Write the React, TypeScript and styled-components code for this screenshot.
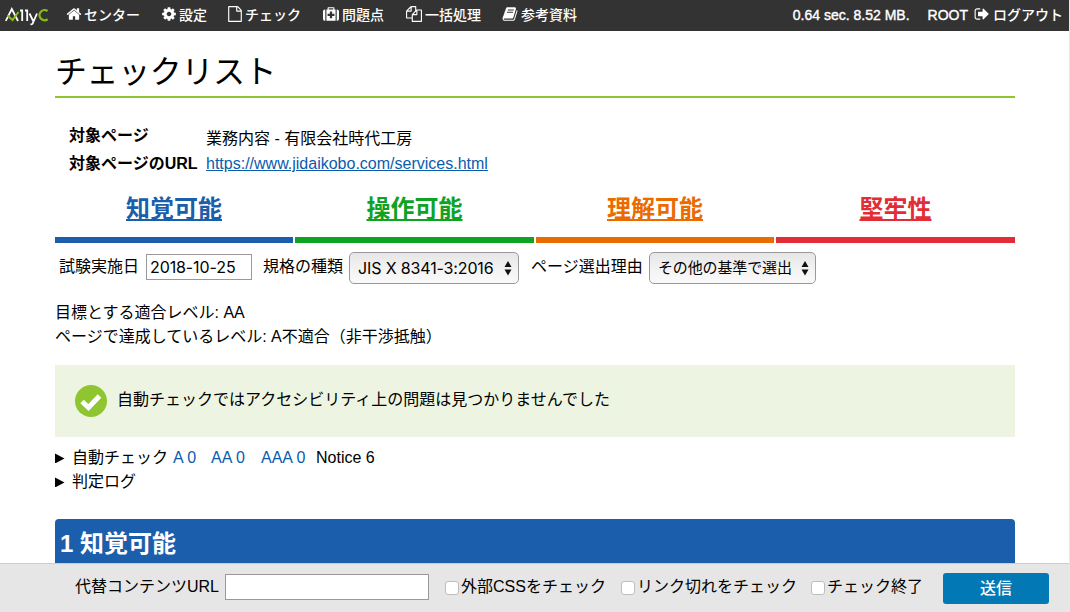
import React from "react";
import styled, { createGlobalStyle } from "styled-components";

const sans = `"Liberation Sans", "Noto Sans CJK JP", sans-serif`;
const ui = `Inter, "Noto Sans CJK JP", sans-serif`;

const Global = createGlobalStyle`
  * { box-sizing: border-box; }
  body { margin: 0; background: #fff; color: #000; font: 16px/24px ${sans}; overflow: hidden; }
  a { color: #0b5cad; }
`;

const Page = styled.div`
  display: flex;
  flex-direction: column;
  width: 1070px;
  height: 612px;
  border-right: 1px solid #e7e7e7;
  white-space: nowrap;
`;

const TopBar = styled.header`
  flex: none;
  display: flex;
  align-items: center;
  height: 31px;
  padding: 0 6px 1px 5px;
  background: #333;
  color: #fff;
  font-size: 14px;
  line-height: 30px;
`;

const Logo = styled.span`
  display: flex;
  width: 61px;
`;

const NavItem = styled.a<{ $w: number; $gap: number }>`
  display: flex;
  align-items: center;
  gap: ${(p) => p.$gap}px;
  width: ${(p) => p.$w}px;
  color: #fff;
  font-weight: 500;
  text-decoration: none;

  svg { margin-top: -2px; }
`;

const Status = styled.span`
  margin-left: auto;
  margin-right: 18px;
  -webkit-text-stroke: 0.4px #fff;
`;

const Logout = styled.a`
  display: flex;
  align-items: center;
  gap: 3px;
  color: #fff;
  font-weight: 500;
  text-decoration: none;

  svg { margin-top: -2px; }
`;

const UserName = styled.span`
  margin-right: 3px;
  -webkit-text-stroke: 0.4px #fff;
`;

const Main = styled.main`
  flex: 1;
  min-height: 0;
  overflow: hidden;
  padding: 17px 54px 0 55px;
`;

const Title = styled.h1`
  margin: 0;
  height: 50px;
  border-bottom: 2px solid #8fc531;
  font: 400 32px/48px ${sans};
  letter-spacing: -0.4px;
`;

const Info = styled.dl`
  display: grid;
  grid-template-columns: 137px 1fr;
  margin: 25px 0 0 14px;
  row-gap: 4px;
`;

const Term = styled.dt`
  height: 24px;
  font-weight: 700;
  line-height: 26px;
`;

const Detail = styled.dd<{ $drop?: number }>`
  margin: 0;
  padding-top: ${(p) => p.$drop ?? 0}px;
  height: 24px;
  line-height: 26px;
`;

const Tabs = styled.nav`
  display: grid;
  grid-template-columns: 238px 239px 238px 239px;
  gap: 2px;
  margin-top: 12px;
`;

const Tab = styled.a<{ $c: string }>`
  height: 56px;
  border-bottom: 6px solid ${(p) => p.$c};
  && { color: ${(p) => p.$c}; }
  font-size: 24px;
  font-weight: 700;
  line-height: 43px;
  text-align: center;
  text-decoration-thickness: 2px;
  text-underline-offset: 2px;
  text-decoration-skip-ink: none;
`;

const FormRow = styled.div`
  display: flex;
  align-items: center;
  height: 32px;
  margin-top: 9px;
  padding-left: 4px;
`;

const Label = styled.label<{ $w: number }>`
  width: ${(p) => p.$w}px;
  margin-top: -2px;
`;

const TextInput = styled.input<{ $w: number; $gap: number }>`
  width: ${(p) => p.$w}px;
  height: 26px;
  margin: -2px ${(p) => p.$gap}px 0 0;
  padding: 0 3px;
  border: 1px solid #999;
  border-radius: 0;
  background: #fff;
  color: #000;
  font: 16px/24px ${ui};
  letter-spacing: -0.1px;
`;

const SelectBox = styled.button<{ $w: number; $gap?: number; $size: number }>`
  display: flex;
  align-items: center;
  justify-content: space-between;
  width: ${(p) => p.$w}px;
  height: 32px;
  margin: 0 ${(p) => p.$gap ?? 0}px 0 0;
  padding: 0 6px 0 8px;
  border: 1px solid #999;
  border-radius: 5px;
  background: linear-gradient(#e6e6e6, #f4f4f4 60%, #fafafa);
  color: #000;
  font: ${(p) => p.$size}px/30px ${ui};
  letter-spacing: -0.14px;
`;

const Levels = styled.div`
  margin-top: 17px;
`;

const Notice = styled.div`
  display: flex;
  align-items: center;
  gap: 10px;
  height: 72px;
  margin-top: 16px;
  padding-left: 20px;
  background: #edf5e2;
`;

const NoticeText = styled.p`
  margin: 0;
  padding-bottom: 3px;
`;

const Toggles = styled.div`
  margin-top: 9px;
`;

const Toggle = styled.div`
  display: flex;
  align-items: center;
  height: 24px;
  line-height: 26px;
`;

const ToggleLabel = styled.span`
  margin: 0 5px 0 7px;
`;

const Level = styled.span<{ $w: number }>`
  width: ${(p) => p.$w}px;
  color: #0b5cad;
`;

const Section = styled.h2`
  margin: 25px 0 0;
  height: 70px;
  padding-left: 5px;
  border-radius: 4px;
  background: #1b5eab;
  color: #fff;
  font: 700 24px/50px ${sans};
`;

const BottomBar = styled.footer`
  flex: none;
  display: flex;
  align-items: center;
  height: 49px;
  padding-left: 75px;
  border-top: 1px solid #ccc;
  background: #e6e6e6;
`;

const Check = styled.label<{ $w: number }>`
  display: flex;
  align-items: center;
  gap: 2px;
  width: ${(p) => p.$w}px;
  margin-top: -3px;
`;

const Box = styled.input`
  appearance: none;
  width: 14px;
  height: 14px;
  margin: 2px 0 0;
  border: 1px solid #bdbdbd;
  border-radius: 3px;
  background: #fff;
`;

const Submit = styled.button`
  width: 106px;
  height: 31px;
  margin-top: 1px;
  padding: 0;
  border: 0;
  border-radius: 3px;
  background: #0278b4;
  color: #fff;
  font: 500 16px/31px ${sans};
`;

const paths = {
  home: "M1472 992v480q0 26-19 45t-45 19h-384v-384h-256v384h-384q-26 0-45-19t-19-45v-480q0-1 .5-3t.5-3l575-474 575 474q1 2 1 6zm223-69l-62 74q-8 9-21 11h-3q-13 0-21-7l-692-577-692 577q-12 8-24 7-13-2-21-11l-62-74q-8-10-7-23.5t11-21.5l719-599q32-26 76-26t76 26l244 204v-195q0-14 9-23t23-9h192q14 0 23 9t9 23v408l219 182q10 8 11 21.5t-7 23.5z",
  cog: "M1152 896q0-106-75-181t-181-75-181 75-75 181 75 181 181 75 181-75 75-181zm512-109v222q0 12-8 23t-20 13l-185 28q-19 54-39 91 35 50 107 138 10 12 10 25t-9 23q-27 37-99 108t-94 71q-12 0-26-9l-138-108q-44 23-91 38-16 136-29 186-7 28-36 28h-222q-14 0-24.5-8.5t-11.5-21.5l-28-184q-49-16-90-37l-141 107q-10 9-25 9-14 0-25-11-126-114-165-168-7-10-7-23 0-12 8-23 15-21 51-66.5t54-70.5q-27-50-41-99l-183-27q-13-2-21-12.5t-8-23.5v-222q0-12 8-23t19-13l186-28q14-46 39-92-40-57-107-138-10-12-10-24 0-10 9-23 26-36 98.5-107.5t94.5-71.5q13 0 26 10l138 107q44-23 91-38 16-136 29-186 7-28 36-28h222q14 0 24.5 8.5t11.5 21.5l28 184q49 16 90 37l142-107q9-9 24-9 13 0 25 10 129 119 165 170 7 8 7 22 0 12-8 23-15 21-51 66.5t-54 70.5q26 50 41 98l183 28q13 2 21 12.5t8 23.5z",
  file: "M1596 380q28 28 48 76t20 88v1152q0 40-28 68t-68 28h-1344q-40 0-68-28t-28-68v-1600q0-40 28-68t68-28h896q40 0 88 20t76 48zm-444-244v376h376q-10-29-22-41l-313-313q-12-12-41-22zm384 1528v-1024h-416q-40 0-68-28t-28-68v-416h-768v1536h1280z",
  medkit: "M1280 1088v-192q0-14-9-23t-23-9h-224v-224q0-14-9-23t-23-9h-192q-14 0-23 9t-9 23v224h-224q-14 0-23 9t-9 23v192q0 14 9 23t23 9h224v224q0 14 9 23t23 9h192q14 0 23-9t9-23v-224h224q14 0 23-9t9-23zm-640-704h512v-128h-512v128zm-384 0v1280h-32q-92 0-158-66t-66-158v-832q0-92 66-158t158-66h32zm1152 0v1280h-1024v-1280h128v-160q0-40 28-68t68-28h576q40 0 68 28t28 68v160h128zm384 224v832q0 92-66 158t-158 66h-32v-1280h32q92 0 158 66t66 158z",
  files: "M1696 384q40 0 68 28t28 68v1216q0 40-28 68t-68 28h-960q-40 0-68-28t-28-68v-288h-544q-40 0-68-28t-28-68v-672q0-40 20-88t48-76l408-408q28-28 76-48t88-20h416q40 0 68 28t28 68v328q68-40 128-40h416zm-544 213l-299 299h299v-299zm-640-384l-299 299h299v-299zm196 647l316-316v-416h-384v416q0 40-28 68t-68 28h-416v640h512v-256q0-40 20-88t48-76zm956 804v-1152h-384v416q0 40-28 68t-68 28h-416v640h896z",
  book: "M1703 478q40 57 18 129l-275 906q-19 64-76.5 107.5t-122.5 43.5h-923q-77 0-148.5-53.5t-99.5-131.5q-24-67-2-127 0-4 3-27t4-37q1-8-3-21.5t-3-19.5q2-11 8-21t16.5-23.5 16.5-23.5q23-38 45-91.5t30-91.5q3-10 .5-30t-.5-28q3-11 17-28t17-23q21-36 42-92t25-90q1-9-2.5-32t.5-28q4-13 22-30.5t22-22.5q19-26 42.5-84.5t27.5-96.5q1-8-3-25.5t-2-26.5q2-8 9-18t18-23 17-21q8-12 16.5-30.5t15-35 16-36 19.5-32 26.5-23.5 36-11.5 47.5 5.5l-1 3q38-9 51-9h761q74 0 114 56t18 130l-274 906q-36 119-71.5 153.5t-128.5 34.5h-869q-27 0-38 15-11 16-1 43 24 70 144 70h923q29 0 56-15.5t35-41.5l300-987q7-22 5-57 38 15 59 43zm-1064 2q-4 13 2 22.5t20 9.5h608q13 0 25.5-9.5t16.5-22.5l21-64q4-13-2-22.5t-20-9.5h-608q-13 0-25.5 9.5t-16.5 22.5zm-83 256q-4 13 2 22.5t20 9.5h608q13 0 25.5-9.5t16.5-22.5l21-64q4-13-2-22.5t-20-9.5h-608q-13 0-25.5 9.5t-16.5 22.5z",
  signOut: "M704 1440q0 4 1 20t.5 26.5-3 23.5-10 19.5-20.5 6.5h-320q-119 0-203.5-84.5t-84.5-203.5v-704q0-119 84.5-203.5t203.5-84.5h320q13 0 22.5 9.5t9.5 22.5q0 4 1 20t.5 26.5-3 23.5-10 19.5-20.5 6.5h-320q-66 0-113 47t-47 113v704q0 66 47 113t113 47h312l11.5 1 11.5 3 8 5.5 7 9 2 13.5zm928-544q0 26-19 45l-544 544q-19 19-45 19t-45-19-19-45v-288h-448q-26 0-45-19t-19-45v-384q0-26 19-45t45-19h448v-288q0-26 19-45t45-19 45 19l544 544q19 19 19 45z",
};

const Icon = ({ name, size = 16 }: { name: keyof typeof paths; size?: number }) => (
  <svg width={size} height={size} viewBox="0 0 1792 1792" fill="currentColor" aria-hidden>
    <path d={paths[name]} />
  </svg>
);

const nav: { icon: keyof typeof paths; label: string; w: number; gap: number }[] = [
  { icon: "home", label: "センター", w: 95, gap: 2 },
  { icon: "cog", label: "設定", w: 66, gap: 2 },
  { icon: "file", label: "チェック", w: 96, gap: 2 },
  { icon: "medkit", label: "問題点", w: 83, gap: 3 },
  { icon: "files", label: "一括処理", w: 96, gap: 3 },
  { icon: "book", label: "参考資料", w: 90, gap: 3 },
];

const tabs = [
  ["知覚可能", "#1b5eab"],
  ["操作可能", "#0fa324"],
  ["理解可能", "#ea6c00"],
  ["堅牢性", "#e22d37"],
];

const Updown = () => (
  <svg width="8" height="16" viewBox="0 0 8 16" aria-hidden>
    <path d="M4 1L7.5 7H.5zM4 15.5L.5 9.5h7z" fill="#111" />
  </svg>
);

const Triangle = () => (
  <svg width="10" height="10" viewBox="0 0 10 10" aria-hidden>
    <path d="M0 .5L9.500 5.500 0 10.500z" fill="#000" />
  </svg>
);

const LogoMark = () => (
  <svg width="46" height="22" viewBox="0 0 46 22" fill="none" aria-label="A11yC">
    <path d="M.8 16.800L6.800 5l6.200 12" stroke="#fff" strokeWidth="1.800" />
    <path d="M2.500 11.500l5 4.500L13.500 8" stroke="#86bc18" strokeWidth="2" />
    <path d="M15 6.500h2.200V17M20 6.500h2.200V17M24.500 9.500l3.700 7.500M32 9.500L27.700 19.500q-.4 1-2.200.7" stroke="#fff" strokeWidth="1.800" />
    <path d="M42.600 7A5.100 5.100 0 1 0 42.600 15.300" stroke="#86bc18" strokeWidth="2.300" />
  </svg>
);

export default function App() {
  return (
    <Page>
      <Global />
      <TopBar>
        <Logo><LogoMark /></Logo>
        {nav.map((n) => (
          <NavItem key={n.label} $w={n.w} $gap={n.gap}>
            <Icon name={n.icon} />
            {n.label}
          </NavItem>
        ))}
        <Status>0.64 sec. 8.52 MB.</Status>
        <Logout>
          <UserName>ROOT</UserName>
          <Icon name="signOut" />
          ログアウト
        </Logout>
      </TopBar>
      <Main>
        <Title>チェックリスト</Title>
        <Info>
          <Term>対象ページ</Term>
          <Detail $drop={3}>業務内容 - 有限会社時代工房</Detail>
          <Term>対象ページのURL</Term>
          <Detail><a href="#page">https://www.jidaikobo.com/services.html</a></Detail>
        </Info>
        <Tabs>
          {tabs.map(([label, c]) => (
            <Tab key={label} href="#section" $c={c}>{label}</Tab>
          ))}
        </Tabs>
        <FormRow>
          <Label $w={87}>試験実施日</Label>
          <TextInput $w={106} $gap={11} defaultValue="2018-10-25" />
          <Label $w={86}>規格の種類</Label>
          <SelectBox $w={170} $gap={12} $size={16}>JIS X 8341-3:2016<Updown /></SelectBox>
          <Label $w={118}>ページ選出理由</Label>
          <SelectBox $w={167} $size={15}>その他の基準で選出<Updown /></SelectBox>
        </FormRow>
        <Levels>
          <div>目標とする適合レベル: AA</div>
          <div>ページで達成しているレベル: A不適合（非干渉抵触）</div>
        </Levels>
        <Notice>
          <svg width="32" height="32" viewBox="0 0 32 32" aria-hidden>
            <circle cx="16" cy="16" r="16" fill="#8fc531" />
            <path d="M7 16.500l6.500 6L24.500 11" fill="none" stroke="#fff" strokeWidth="5" />
          </svg>
          <NoticeText>自動チェックではアクセシビリティ上の問題は見つかりませんでした</NoticeText>
        </Notice>
        <Toggles>
          <Toggle>
            <Triangle />
            <ToggleLabel>自動チェック</ToggleLabel>
            <Level $w={38}>A 0</Level>
            <Level $w={50}>AA 0</Level>
            <Level $w={55}>AAA 0</Level>
            <span>Notice 6</span>
          </Toggle>
          <Toggle>
            <Triangle />
            <ToggleLabel>判定ログ</ToggleLabel>
          </Toggle>
        </Toggles>
        <Section>1 知覚可能</Section>
      </Main>
      <BottomBar>
        <Label $w={150}>代替コンテンツURL</Label>
        <TextInput $w={204} $gap={16} />
        <Check $w={176}><Box type="checkbox" />外部CSSをチェック</Check>
        <Check $w={190}><Box type="checkbox" />リンク切れをチェック</Check>
        <Check $w={132}><Box type="checkbox" />チェック終了</Check>
        <Submit>送信</Submit>
      </BottomBar>
    </Page>
  );
}
